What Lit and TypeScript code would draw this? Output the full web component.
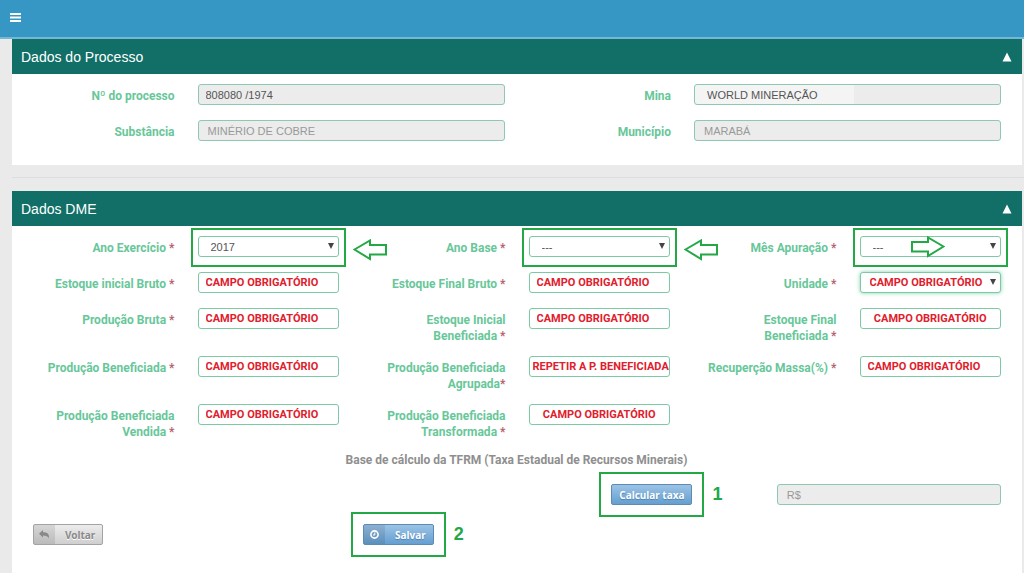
import { LitElement, html, css, svg, nothing } from "lit";
import { customElement } from "lit/decorators.js";
import { classMap } from "lit/directives/class-map.js";

type Field = {
  id: string;
  label: string;
  tail?: string;
  value: string;
  kind?: "select";
  tight?: boolean;
  look?: string;
  frame?: boolean;
  arrow?: "after" | "inside";
};

const FILL = "CAMPO OBRIGATÓRIO";

const processo: Field[] = [
  { id: "numero", label: "Nº do processo", value: "808080 /1974", look: "dark" },
  { id: "mina", label: "Mina", value: "WORLD MINERAÇÃO", look: "patch" },
  { id: "substancia", label: "Substância", value: "MINÉRIO DE COBRE" },
  { id: "municipio", label: "Município", value: "MARABÁ" },
];

const dme: Field[] = [
  { id: "exercicio", label: "Ano Exercício", value: "2017", kind: "select", frame: true, arrow: "after" },
  { id: "base", label: "Ano Base", value: "---", kind: "select", frame: true, arrow: "after" },
  { id: "mes", label: "Mês Apuração", value: "---", kind: "select", frame: true, arrow: "inside" },
  { id: "eib", label: "Estoque inicial Bruto", value: FILL },
  { id: "efb", label: "Estoque Final Bruto", value: FILL },
  { id: "unidade", label: "Unidade", value: FILL, kind: "select", look: "focus" },
  { id: "pb", label: "Produção Bruta", value: FILL },
  { id: "eibenef", label: "Estoque Inicial", tail: "Beneficiada", value: FILL },
  { id: "efbenef", label: "Estoque Final", tail: "Beneficiada", value: FILL, look: "center" },
  { id: "pbenef", label: "Produção Beneficiada", value: FILL },
  { id: "agrupada", label: "Produção Beneficiada", tail: "Agrupada", value: "REPETIR A P. BENEFICIADA", tight: true, look: "long" },
  { id: "massa", label: "Recuperção Massa(%)", value: FILL },
  { id: "vendida", label: "Produção Beneficiada", tail: "Vendida", value: FILL },
  { id: "transformada", label: "Produção Beneficiada", tail: "Transformada", value: FILL, look: "center" },
];

const arrowShape = svg`<path d="M1.5 10.5 17 1.5V6H33V15.5H17V20Z" fill="#fff" stroke="#22a845" stroke-width="2"/>`;

@customElement("app-root")
export class AppRoot extends LitElement {
  static styles = css`
    :host {
      display: block;
      min-height: 100vh;
      background: #eaeaea;
      font-family: "Liberation Sans", Arial, sans-serif;
      font-size: 11px;
      color: #555;
      overflow: hidden;
    }
    * { box-sizing: border-box; }
    .page { display: flex; flex-direction: column; min-height: 100vh; }
    .topbar {
      display: flex;
      align-items: center;
      height: 39px;
      padding: 0 10px 2px;
      background: #3697c4;
      border-bottom: 2px solid #73b9d4;
    }
    .menu { display: flex; padding: 0; border: 0; background: none; }
    .panel { margin: 0 2px 0 12px; background: #fff; }
    .last { flex: 1; }
    .bar {
      display: flex;
      align-items: center;
      justify-content: space-between;
      height: 35px;
      padding: 0 10px 0 9px;
      background: #116f67;
      color: #fff;
    }
    h2 { margin: 0; font-size: 14px; font-weight: 400; }
    .fold { display: flex; padding: 0; border: 0; background: none; }
    .body { padding: 10px 9px 9px 8px; }
    .rule { height: 1px; margin: 12px 0 13px 12px; background: #dcdfdf; }
    .grid { display: grid; grid-template-columns: repeat(12, minmax(0, 1fr)); }
    .label {
      grid-column: span 2;
      padding: 4px 11px 0;
      margin-bottom: 12px;
      font-family: Roboto, "Liberation Sans", sans-serif;
      font-size: 12px;
      font-weight: 700;
      line-height: 16px;
      text-align: right;
      color: #68c79a;
    }
    .star { color: #b4616d; }
    .cell { grid-column: span 2; padding: 0 12px 3px; margin-bottom: 12px; }
    .wide { grid-column: span 4; }
    .wrap { position: relative; display: block; height: 21px; }
    .control {
      display: block;
      width: 100%;
      height: 21px;
      margin: 0;
      padding: 0 7px;
      border: 1px solid #7ccaa5;
      border-radius: 3px;
      background: #fff;
      font-family: Roboto, sans-serif;
      font-size: 11px;
      font-weight: 700;
      color: #e0202c;
      appearance: none;
      outline: 0;
    }
    .readonly, .pick {
      font-family: "Liberation Sans", Arial, sans-serif;
      font-weight: 400;
    }
    .readonly { padding: 0 9px; background: #ececec; color: #999; border-color: #8cc9ae; }
    .pick { padding: 0 12px; color: #555; }
    .dark { padding: 0 7px; color: #555; }
    .patch {
      padding: 0 12px;
      color: #555;
      background: linear-gradient(90deg, #f4f4f4 52%, #ececec 52%);
    }
    .focus { padding: 0 9px; box-shadow: 0 0 4px #7fd3ae; }
    .center { padding: 0; text-align: center; }
    .long { padding: 0 0 0 3px; }
    .caret { position: absolute; right: 5px; top: 7px; pointer-events: none; }
    .frame {
      position: absolute;
      inset: -8px -7px -10px;
      border: 2px solid #22a845;
      pointer-events: none;
    }
    .arrow { position: absolute; pointer-events: none; }
    .after { left: calc(100% + 14px); top: 3px; }
    .inside { left: 50px; top: 0; }
    .basis {
      grid-column: span 12;
      margin: 0 0 16px;
      font-size: 12px;
      font-weight: 700;
      line-height: 16px;
      font-family: Roboto, "Liberation Sans", sans-serif;
      text-align: center;
      color: #8f8f8f;
    }
    .calc { grid-column: 8 / span 2; padding: 0 12px; margin-bottom: 19px; }
    .total { grid-column: 10 / span 3; padding: 0 12px; }
    .back { grid-column: 1 / span 4; padding: 0 13px; }
    .save { grid-column: 5 / span 2; padding: 0 12px; }
    .hold { position: relative; display: inline-flex; vertical-align: top; }
    .btn {
      display: flex;
      align-items: center;
      height: 21px;
      padding: 0 7px;
      border: 1px solid #5c8bb5;
      border-radius: 2px;
      background: linear-gradient(#9cc3e6, #659fd0);
      font-family: "Noto Sans", sans-serif;
      font-size: 10px;
      font-weight: 700;
      color: #fff;
      text-shadow: 0 1px 1px #4d80ad;
    }
    .iconed { padding: 0 7px 0 0; gap: 10px; }
    .chip {
      display: flex;
      align-items: center;
      justify-content: center;
      width: 21px;
      height: 19px;
      background: #00000018;
    }
    .grey {
      border-color: #a3a3a3;
      background: linear-gradient(#ececec, #cfcfcf);
      color: #8a8a8a;
      text-shadow: 0 1px 0 #fff;
    }
    .mark { position: absolute; inset: -12px; border: 2px solid #22a845; pointer-events: none; }
    .step {
      position: absolute;
      left: calc(100% + 20px);
      top: 0;
      font-size: 18px;
      font-weight: 700;
      line-height: 21px;
      color: #22a845;
    }
  `;

  private bar(title: string) {
    return html`<header class="bar">
      <h2>${title}</h2>
      <button class="fold" type="button" aria-label="Recolher ${title}">
        <svg width="10" height="10" viewBox="0 0 10 10"><path d="M5 .5 9.5 9.5H.5Z" fill="#fff" /></svg>
      </button>
    </header>`;
  }

  private control(f: Field) {
    const look = f.look ?? "plain";
    if (f.kind === "select") {
      return html`<select id=${f.id} class=${classMap({ control: true, pick: look === "plain", [look]: true })}>
          <option>${f.value}</option>
        </select>
        <svg class="caret" width="6" height="6" viewBox="0 0 6 6"><path d="M0 0H6L3 6Z" fill="#444" /></svg>`;
    }
    return html`<input id=${f.id} type="text" class=${classMap({ control: true, [look]: true })} .value=${f.value} />`;
  }

  private arrow(kind: "after" | "inside") {
    return html`<svg class="arrow ${kind}" width="35" height="22" viewBox="0 0 35 22">
      <g transform=${kind === "inside" ? "translate(35 0) scale(-1 1)" : "translate(0 0)"}>${arrowShape}</g>
    </svg>`;
  }

  private dmeField(f: Field) {
    return html`<label class="label" for=${f.id}
        >${f.label}${f.tail ? html`<br /><span>${f.tail}</span>` : nothing}${f.tight ? "" : " "}<span class="star">*</span></label
      >
      <div class="cell">
        <span class="wrap">
          ${this.control(f)}
          ${f.frame ? html`<span class="frame"></span>` : nothing}
          ${f.arrow ? this.arrow(f.arrow) : nothing}
        </span>
      </div>`;
  }

  render() {
    return html`<div class="page">
      <nav class="topbar">
        <button class="menu" type="button" aria-label="Menu">
          <svg width="11" height="9" viewBox="0 0 11 9"><path d="M0 1H11M0 4.5H11M0 8H11" stroke="#fff" stroke-width="2" /></svg>
        </button>
      </nav>
      <section class="panel">
        ${this.bar("Dados do Processo")}
        <div class="body grid">
          ${processo.map(
            (f) => html`<label class="label" for=${f.id}>${f.label}</label>
              <div class="cell wide">
                <input id=${f.id} type="text" readonly class="control readonly ${f.look ?? ""}" .value=${f.value} />
              </div>`
          )}
        </div>
      </section>
      <div class="rule"></div>
      <section class="panel last">
        ${this.bar("Dados DME")}
        <form class="body">
          <div class="grid">${dme.map((f) => this.dmeField(f))}</div>
          <div class="grid">
            <p class="basis">Base de cálculo da TFRM (Taxa Estadual de Recursos Minerais)</p>
            <div class="calc">
              <span class="hold">
                <button class="btn" type="button">Calcular taxa</button>
                <span class="mark"></span>
                <span class="step">1</span>
              </span>
            </div>
            <div class="total">
              <input type="text" readonly class="control readonly" aria-label="Valor da taxa" .value=${"R$"} />
            </div>
            <div class="back">
              <button class="btn iconed grey" type="button">
                <span class="chip">
                  <svg width="11" height="9" viewBox="0 0 11 9">
                    <path d="M4 0V2.2C8 2.2 10.8 3.6 9.8 8.6 9 6 7 5.4 4 5.4V7.6L0 3.8Z" fill="#888" />
                  </svg>
                </span>
                Voltar
              </button>
            </div>
            <div class="save">
              <span class="hold">
                <button class="btn iconed" type="button">
                  <span class="chip">
                    <svg width="9" height="9" viewBox="0 0 9 9">
                      <circle cx="4.5" cy="4.5" r="3.6" fill="none" stroke="#fff" stroke-width="1.6" />
                      <path d="M4.8 2.4V5H3" fill="none" stroke="#fff" />
                    </svg>
                  </span>
                  Salvar
                </button>
                <span class="mark"></span>
                <span class="step">2</span>
              </span>
            </div>
          </div>
        </form>
      </section>
    </div>`;
  }
}
